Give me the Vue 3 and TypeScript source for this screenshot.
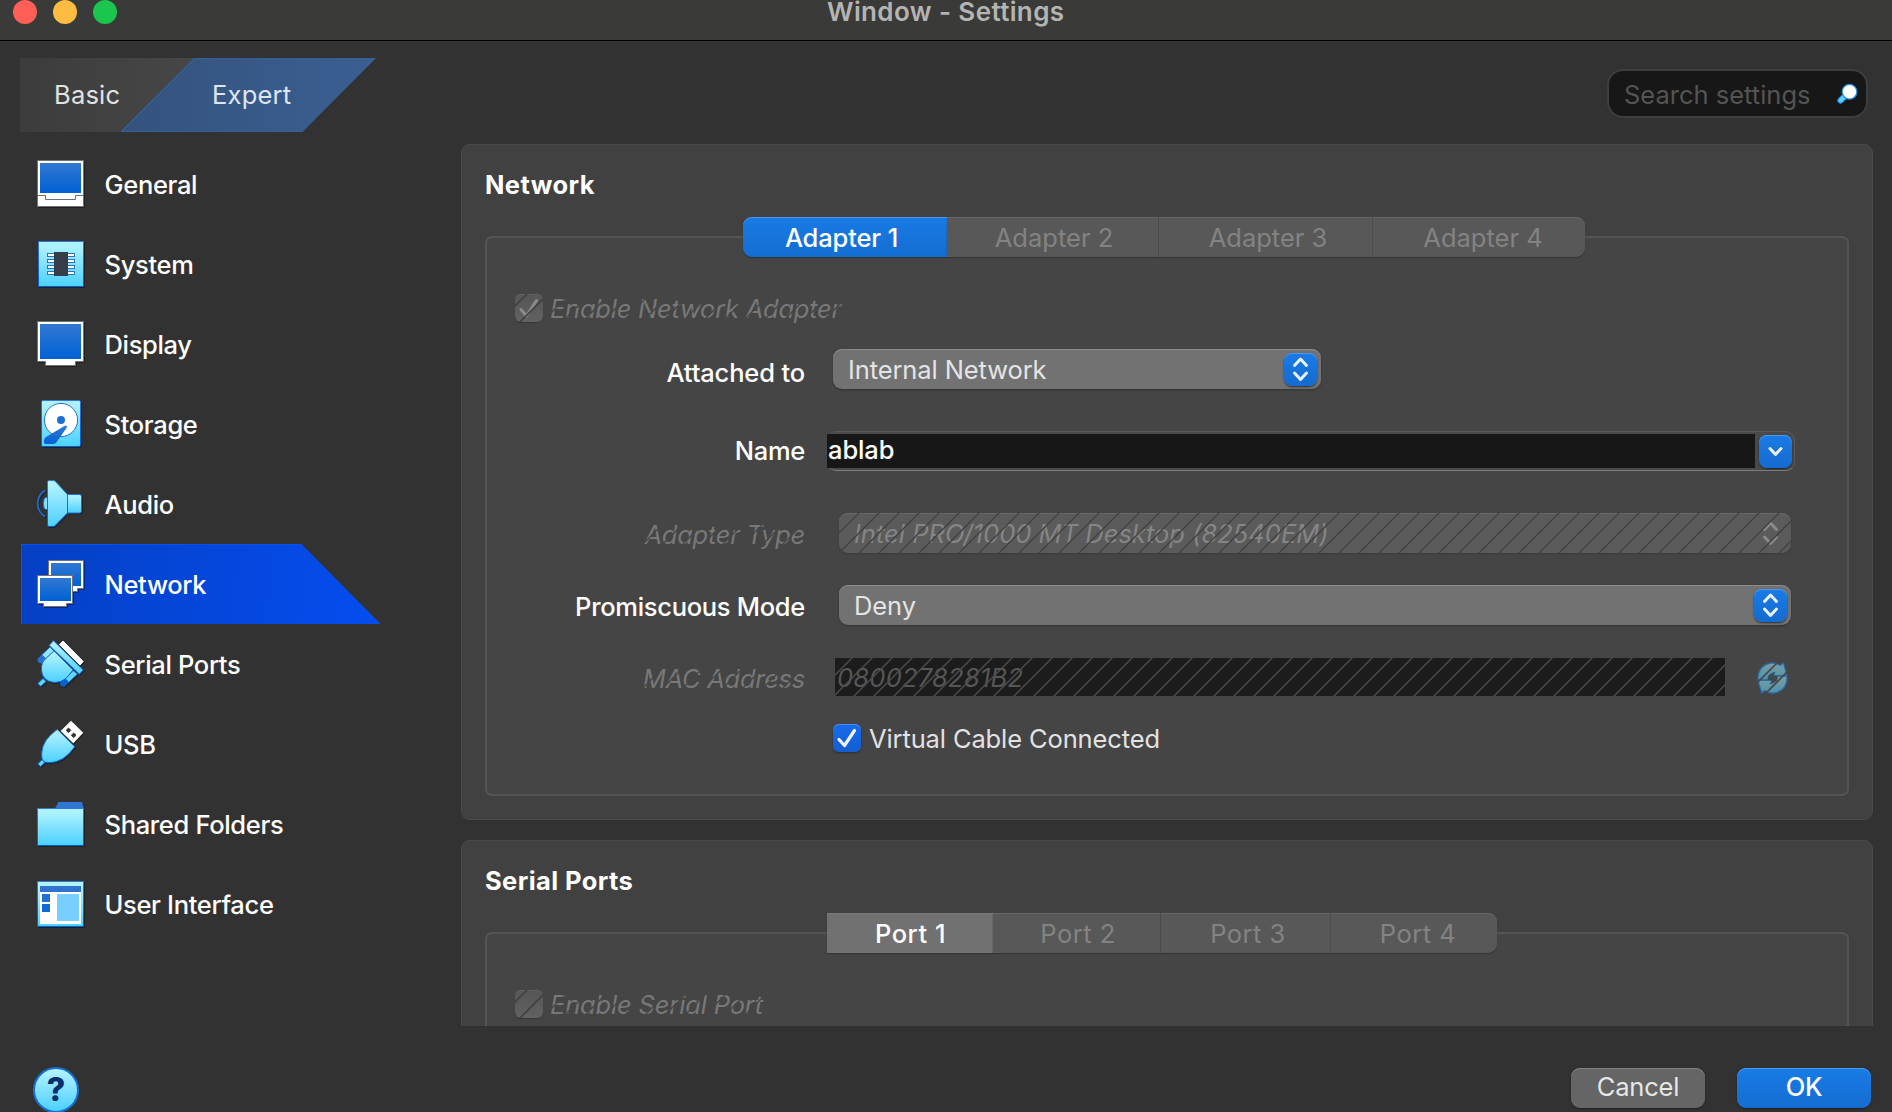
<script setup lang="ts">
type Tab = { label: string; width: number }

const navItems: string[] = [
  'General', 'System', 'Display', 'Storage', 'Audio',
  'Network', 'Serial Ports', 'USB', 'Shared Folders', 'User Interface',
]
const current = 'Network'

const adapterTabs: Tab[] = [
  { label: 'Adapter 1', width: 204 },
  { label: 'Adapter 2', width: 212 },
  { label: 'Adapter 3', width: 214 },
  { label: 'Adapter 4', width: 212 },
]
const portTabs: Tab[] = [
  { label: 'Port 1', width: 166 },
  { label: 'Port 2', width: 168 },
  { label: 'Port 3', width: 170 },
  { label: 'Port 4', width: 166 },
]
const pinRows: number[] = [13.5, 19.5, 25.5, 31.5]
</script>

<template>
  <div class="window">
    <!-- shared gradients and the disabled hatch -->
    <svg class="defs" width="0" height="0">
      <defs>
        <linearGradient id="deep" x1="0" y1="0" x2="0" y2="1">
          <stop offset="0" stop-color="#3278d2" /><stop offset="1" stop-color="#0061d5" />
        </linearGradient>
        <linearGradient id="aqua" x1="0" y1="0" x2="0" y2="1">
          <stop offset="0.1" stop-color="#aef2ff" /><stop offset="1" stop-color="#4cd0ff" />
        </linearGradient>
        <linearGradient id="edge" x1="0" y1="0" x2="0" y2="1">
          <stop offset="0" stop-color="#3278d2" /><stop offset="1" stop-color="#0061d5" />
        </linearGradient>
        <linearGradient id="muted" x1="0" y1="0" x2="0" y2="1">
          <stop offset="0" stop-color="#7f9ea6" /><stop offset="1" stop-color="#4a93ab" />
        </linearGradient>
        <pattern id="hatch" width="20" height="20" patternUnits="userSpaceOnUse">
          <path d="M-1 21L21 -1M-1 1L1 -1M19 21L21 19" stroke="#414141" stroke-width="1.5" />
        </pattern>
        <pattern id="hatchLight" width="20" height="20" patternUnits="userSpaceOnUse" patternTransform="translate(-3 0)">
          <path d="M-1 21L21 -1M-1 1L1 -1M19 21L21 19" stroke="#4a4a4a" stroke-width="1.5" />
        </pattern>
        <pattern id="hatchText" width="20" height="20" patternUnits="userSpaceOnUse">
          <path d="M-1 21L21 -1M-1 1L1 -1M19 21L21 19" stroke="#454545" stroke-width="1.4" />
        </pattern>
      </defs>
    </svg>

    <div class="titlebar">
      <div class="lights"><i class="red" /><i class="yellow" /><i class="green" /></div>
      <div class="title">Window - Settings</div>
    </div>

    <header class="toolbar">
      <div class="modes">
        <svg class="modes-bg" width="357" height="74" viewBox="0 0 357 74">
          <defs>
            <linearGradient id="basicFill" x1="0" x2="1" y1="0" y2="0">
              <stop offset="0" stop-color="#3c3c3c" /><stop offset="1" stop-color="#474747" />
            </linearGradient>
            <linearGradient id="expertFill" x1="0" x2="1" y1="0" y2="0">
              <stop offset="0" stop-color="#34527c" /><stop offset="1" stop-color="#3b5f93" />
            </linearGradient>
          </defs>
          <path d="M0 0H174L100 74H0Z" fill="url(#basicFill)" />
          <path d="M174 0H356L282.500 74H100.500Z" fill="url(#expertFill)" />
          <path d="M101.500 73.500L174.500 .5H355M101 73.500H282" fill="none" stroke="#375f94" stroke-width="1.400" />
        </svg>
        <span class="mode basic">Basic</span>
        <span class="mode expert">Expert</span>
      </div>
      <div class="search">
        <span>Search settings</span>
        <svg width="22" height="22" viewBox="0 0 22 22">
          <path d="M3.500 17.500L8 13" stroke="#1a86dd" stroke-width="6.500" stroke-linecap="round" />
          <path d="M3.800 17.300L8 13" stroke="#5fd0ff" stroke-width="4.500" stroke-linecap="round" />
          <circle cx="12.500" cy="8.800" r="7.400" fill="#fff" stroke="#1f86dc" stroke-width="1.200" />
        </svg>
      </div>
    </header>

    <main class="body">
      <nav class="nav">
        <div v-for="item in navItems" :key="item" class="nav-item" :class="{ active: item === current }">
          <svg class="nav-icon" width="48" height="48" viewBox="0 0 48 48">
            <template v-if="item === 'General'">
              <rect x=".5" y=".5" width="46" height="46" fill="#fff" stroke="#737373" />
              <rect x="3" y="3" width="41" height="30" fill="url(#deep)" />
              <path d="M.5 35.500H8.500V39.500H38.500V35.500H46.500" fill="none" stroke="#6e6e6e" />
            </template>
            <template v-else-if="item === 'System'">
              <rect x="1.500" y="1.500" width="45" height="45" fill="url(#aqua)" stroke="url(#edge)" />
              <rect v-for="y in pinRows" :key="y" x="10.500" :y="y" width="27" height="3" fill="#fff" stroke="#2f74bb" />
              <rect x="17" y="12" width="14" height="24" fill="#373c49" />
            </template>
            <template v-else-if="item === 'Display'">
              <path d="M.5 1.500H46.500V41.500H38.500V45.500H8.500V41.500H.5Z" fill="#fff" stroke="#737373" />
              <rect x="3" y="4" width="41" height="35" fill="url(#deep)" />
            </template>
            <template v-else-if="item === 'Storage'">
              <rect x="4.500" y=".5" width="39" height="46" rx="1.500" fill="url(#aqua)" stroke="url(#edge)" />
              <circle cx="24" cy="20" r="16.600" fill="#fff" stroke="#2372d2" />
              <circle cx="24" cy="20" r="4" fill="#1f6fd3" />
              <path d="M29.600 26Q29 25 27 26.200L9 37Q6.500 39 7 42.800Q7.500 44 9 44H16.500Q18.800 43.800 20 41.500L29.500 28Q30.200 26.800 29.600 26Z" fill="url(#deep)" />
            </template>
            <template v-else-if="item === 'Audio'">
              <path d="M10.500 17.500H8.500Q6.500 18.500 6.500 23.500T8.500 29.500H10.500Z" fill="#84e4ff" stroke="#1f70d2" />
              <path d="M8 10.500Q.8 15 .8 23.500T8 36.500" fill="none" stroke="#1b6ed3" stroke-width="1.700" />
              <rect x="29.500" y="14.500" width="15" height="18.500" rx="2" fill="url(#aqua)" stroke="#1f70d2" />
              <path d="M10.500 2Q10.500 .5 12 .5H16Q17.500 .5 18.500 1.600L30.500 14.500V33L18.500 45.200Q17.500 46.500 16 46.500H12Q10.500 46.500 10.500 45Z" fill="url(#aqua)" stroke="url(#edge)" />
            </template>
            <template v-else-if="item === 'Network'">
              <path d="M11.500 .5H46.500V28.500H40.500V31.500H17V28.500H11.500Z" fill="#fff" stroke="#737373" />
              <rect x="14" y="3" width="30" height="23" fill="url(#deep)" />
              <path d="M.5 15.500H35.500V43.500H29.500V46.500H6.500V43.500H.5Z" fill="#fff" stroke="#737373" />
              <rect x="3" y="18" width="31" height="23" fill="url(#deep)" />
            </template>
            <template v-else-if="item === 'Serial Ports'">
              <path d="M26 1L46.200 21.500L43 25L22.500 4.500Z" fill="#fff" stroke="#fff" stroke-linejoin="round" />
              <path d="M.8 43.500L6 38.500L9 41.500L3.800 46.300Z" fill="#5fd7ff" stroke="#126cd4" />
              <path d="M4.700 15L13 7L17 11L8.500 19Z" fill="#8ee7ff" stroke="#1f70d2" />
              <path d="M.5 19L4.700 14.500L9 18.500L4.500 24L1 22Z" fill="#2471d3" />
              <path d="M28 38.700L36 30.500L40.500 34L31.500 42.500Z" fill="#60d6ff" stroke="#1f70d2" />
              <path d="M23 42.700L28 38.500L32 42L27.500 47L24 46Z" fill="#0862d4" />
              <path d="M17 11L36 30L29 38.500Q24 42.800 17 42.500Q5 41 4.500 30Q4 22 9 18.500Z" fill="url(#aqua)" stroke="url(#edge)" />
              <path d="M16.500 .8L46.300 30L42.300 34.300L12.300 5.300Z" fill="url(#aqua)" stroke="url(#edge)" stroke-linejoin="round" />
            </template>
            <template v-else-if="item === 'USB'">
              <path d="M34 .8L46.300 12.700L36.300 23.300L23.700 11Z" fill="#fff" />
              <path d="M31.500 8L33.800 10.300L31.500 12.600L29.200 10.300ZM36.700 13L39 15.300L36.700 17.600L34.400 15.300Z" fill="#333" stroke="#333" />
              <path d="M.8 44L5.200 39.500L8 42.300L3.600 46.500Z" fill="#5fd7ff" stroke="#126cd4" />
              <path d="M20.300 9.500L37.700 26.700Q27 42.500 12 42.800Q8 42.500 6 41Q4.500 39 4.600 34Q5 20 20.300 9.500Z" fill="url(#aqua)" stroke="url(#edge)" />
            </template>
            <template v-else-if="item === 'Shared Folders'">
              <path d="M18 8.500L21.500 2H45L47 8.500Z" fill="#2f75d1" />
              <rect x=".5" y="8.500" width="46" height="37" fill="url(#aqua)" stroke="url(#edge)" />
            </template>
            <template v-else>
              <rect x=".5" y="1.500" width="46" height="45" fill="url(#aqua)" stroke="url(#edge)" />
              <rect x="3" y="12" width="41" height="32" fill="#fff" />
              <rect x="3" y="6" width="41" height="6" fill="#2f73cf" />
              <rect x="5" y="14" width="8" height="8" fill="#2170d2" />
              <rect x="5" y="24" width="8" height="8" fill="#0f68d3" />
              <rect x="20" y="14" width="22" height="27" fill="#78cfff" />
            </template>
          </svg>
          <span>{{ item }}</span>
        </div>
      </nav>

      <section class="content">
        <article class="panel network">
          <h2>Network</h2>
          <div class="tabs adapters">
            <div v-for="(t, i) in adapterTabs" :key="t.label" class="tab" :class="{ selected: i === 0 }" :style="{ width: t.width + 'px' }">{{ t.label }}</div>
          </div>
          <div class="group">
            <div class="check-row">
              <div class="check off">
                <svg width="28" height="28" viewBox="0 0 28 28">
                  <path d="M6 15.500L11.500 22L21.500 6.500" fill="none" stroke="#8b8b8b" stroke-width="3" stroke-linecap="round" stroke-linejoin="round" />
                  <path d="M-1 13L13 -1M4 29L29 4" stroke="#414141" stroke-width="1.700" />
                </svg>
              </div>
              <span class="dim">Enable Network Adapter
                <svg class="hatch"><rect width="100%" height="100%" fill="url(#hatchText)" /></svg>
              </span>
            </div>

            <div class="row r1">
              <label>Attached to</label>
              <div class="select">
                <span>Internal Network</span>
                <svg class="stepper" width="33" height="33" viewBox="0 0 33 33"><path d="M10.500 12.500L16.500 6L22.500 12.500M10.500 20L16.500 26.500L22.500 20" /></svg>
              </div>
            </div>

            <div class="row r2">
              <label>Name</label>
              <div class="combo">
                <div class="combo-text">ablab</div>
                <svg class="stepper" width="33" height="33" viewBox="0 0 33 33"><path d="M11 13.500L16.500 19.500L22 13.500" /></svg>
              </div>
            </div>

            <div class="row r3">
              <label class="dim">Adapter Type
                <svg class="hatch"><rect width="100%" height="100%" fill="url(#hatchText)" /></svg>
              </label>
              <div class="select disabled">
                <span>Intel PRO/1000 MT Desktop (82540EM)</span>
                <svg class="stepper plain" width="33" height="33" viewBox="0 0 33 33"><path d="M10.500 12.500L16.500 6L22.500 12.500M10.500 20L16.500 26.500L22.500 20" /></svg>
                <svg class="hatch"><rect width="100%" height="100%" fill="url(#hatch)" /></svg>
              </div>
            </div>

            <div class="row r4">
              <label>Promiscuous Mode</label>
              <div class="select">
                <span>Deny</span>
                <svg class="stepper" width="33" height="33" viewBox="0 0 33 33"><path d="M10.500 12.500L16.500 6L22.500 12.500M10.500 20L16.500 26.500L22.500 20" /></svg>
              </div>
            </div>

            <div class="row r5">
              <label class="dim">MAC Address
                <svg class="hatch"><rect width="100%" height="100%" fill="url(#hatchText)" /></svg>
              </label>
              <div class="mac">
                <span>0800278281B2</span>
                <svg class="hatch"><rect width="100%" height="100%" fill="url(#hatchLight)" /></svg>
              </div>
              <svg class="refresh" width="32" height="32" viewBox="0 0 32 32">
                <g fill="url(#muted)" stroke="#2c6aa5" stroke-width="1.200" stroke-linejoin="round">
                  <path d="M1 17.800Q.5 3 15 .8Q20 .8 23.300 3.500L26.300 .8L30 13.500L14.500 13.500L17 10.500Q11 12 10.500 17.800Z" />
                  <path d="M30 14.200Q30.500 29 16 31.200Q11 31.200 7.700 28.500L4.700 31.200L1 18.500L16.500 18.500L14 21.500Q20 20 20.500 14.200Z" />
                </g>
                <path d="M18.500 10L11.500 13.500L11 18H15L12.500 22.500L20 18.500L20.500 14H16.500Z" fill="#41484d" />
                <path d="M0 21L20 1M9 31L30 10" stroke="#454545" stroke-width="1.600" />
              </svg>
            </div>

            <div class="row r6">
              <div class="check on">
                <svg width="28" height="28" viewBox="0 0 28 28"><path d="M6 15.500L11.500 21.500L21.500 6.500" fill="none" stroke="#f0f5fd" stroke-width="3.200" stroke-linecap="round" stroke-linejoin="round" /></svg>
              </div>
              <span>Virtual Cable Connected</span>
            </div>
          </div>
        </article>

        <article class="panel serial">
          <h2>Serial Ports</h2>
          <div class="tabs ports">
            <div v-for="(t, i) in portTabs" :key="t.label" class="tab" :class="{ selected: i === 0 }" :style="{ width: t.width + 'px' }">{{ t.label }}</div>
          </div>
          <div class="group">
            <div class="check-row">
              <div class="check off">
                <svg width="28" height="28" viewBox="0 0 28 28"><path d="M-1 13L13 -1M4 29L29 4" stroke="#414141" stroke-width="1.700" /></svg>
              </div>
              <span class="dim">Enable Serial Port
                <svg class="hatch"><rect width="100%" height="100%" fill="url(#hatchText)" /></svg>
              </span>
            </div>
          </div>
        </article>
      </section>
    </main>

    <footer class="footer">
      <div class="help">?</div>
      <div class="actions">
        <button class="btn">Cancel</button>
        <button class="btn primary">OK</button>
      </div>
    </footer>
  </div>
</template>

<style>
body { margin: 0; background: #323232; }
</style>

<style scoped>
.window {
  width: 1892px; height: 1112px; overflow: hidden; display: flex; flex-direction: column;
  background: #323232; color: #fff;
  font: 400 25.5px/30px Inter, "Liberation Sans", sans-serif;
  white-space: nowrap;
}
.defs { position: absolute; }
.titlebar {
  height: 40px; flex: none; display: flex; background: #3a3a38; border-bottom: 1px solid #000;
}
.lights { display: flex; gap: 16px; padding-left: 13px; width: 815px; box-sizing: border-box; flex: none; }
.lights i { width: 24px; height: 24px; border-radius: 50%; }
.red { background: #ff5f57; }
.yellow { background: #febc40; }
.green { background: #1ac64e; }
.title { margin-left: 12px; line-height: 23px; font-weight: 600; font-size: 26px; letter-spacing: .38px; color: #b4b4b3; }

.toolbar { height: 103px; flex: none; display: flex; justify-content: space-between; box-sizing: border-box; padding: 17px 24px 0 20px; }
.modes { display: grid; grid-template-columns: 157px 200px; height: 74px; }
.modes-bg { grid-area: 1 / 1 / 2 / 3; }
.mode { padding-top: 22px; color: #e2e2e2; letter-spacing: .2px; }
.basic { grid-area: 1 / 1; padding-left: 34px; }
.expert { grid-area: 1 / 2; padding-left: 35px; color: #dfe6ef; }
.search {
  display: flex; align-items: flex-start; justify-content: space-between; box-sizing: border-box;
  width: 261px; height: 49px; margin-top: 11px; padding: 9px 7px 0 15px;
  border: 2px solid #3e3e3e; border-radius: 16px; background: #171717; color: #545454;
}
.search svg { margin-top: 3px; }

.body { height: 882px; flex: none; display: flex; }
.nav { width: 440px; padding-left: 21px; flex: none; }
.nav-item { display: flex; height: 80px; width: 360px; font-weight: 500; letter-spacing: -.33px; }
.nav-item span { margin: 26px 0 0 19.500px; }
.nav-item.active {
  background: linear-gradient(100deg, #0540c4, #054df0);
  clip-path: polygon(0 0, 280.500px 0, 359.500px 100%, 0 100%);
  box-shadow: inset 1px 1px #0a50ea;
}
.nav-icon { margin: 16px 0 0 16px; filter: drop-shadow(1px 1px 0 rgba(0, 0, 0, .35)); }

.content { width: 1412px; overflow: hidden; display: flex; flex-direction: column; gap: 20px; }
.panel { flex: none; box-sizing: border-box; border: 1px solid #4a4a4a; border-radius: 9px; background: #414141; padding: 25px 23px 0 23px; }
.network { height: 676px; }
.serial { height: 676px; }
h2 { margin: 0; font-size: 25.500px; font-weight: 700; line-height: 30px; letter-spacing: .4px; }
.tabs { display: flex; position: relative; z-index: 1; height: 40px; margin-top: 17px; }
.adapters { margin-left: 258px; }
.ports { margin-left: 342px; }
.tab {
  box-sizing: border-box; padding: 6px 0 0 3px; text-align: center; background: #585858; color: #838383;
  border-right: 1px solid #505050; box-shadow: inset 0 1px #676767, 0 1px 1px #353535;
}
.tab:nth-child(3) { padding-left: 5px; }
.tab:nth-child(4) { padding-left: 8px; }
.tab:last-child { border-radius: 0 9px 9px 0; border-right: 0; }
.adapters .tab.selected {
  background: linear-gradient(#187be6, #156dd1); border-radius: 9px 0 0 9px; color: #fff; border-right: 0;
  font-weight: 500; letter-spacing: -.15px; padding: 6px 7px 0 0; box-shadow: inset 0 1px #4d98eb, 0 1px 1px #303030;
}
.ports .tab { letter-spacing: .5px; }
.ports .tab.selected { padding-left: 1px; background: #717171; color: #fff; border-right: 0; font-weight: 500; box-shadow: inset 0 1px #7b7b7b, 0 1px 1px #353535; }
.group { box-sizing: border-box; height: 560px; margin-top: -21px; border: 2px solid #545454; border-radius: 7px; background: #454545; }

.check-row { display: flex; height: 30px; padding: 56px 0 0 28px; }
.check { width: 28px; height: 28px; border-radius: 6px; flex: none; }
.check svg { display: block; }
.check.off { background: linear-gradient(#565656, #616161); box-shadow: inset 0 1px #626262, 0 1px 1px #383838; }
.check.on { background: linear-gradient(#166cec, #155dd0); box-shadow: inset 0 1px #4b8df0, 0 1px 2px #2c2c2c; }
.check-row span { margin-left: 7px; letter-spacing: -.24px; }
.serial .check-row span { letter-spacing: -.16px; }
.dim { position: relative; color: #787878; font-style: italic; }
.hatch { position: absolute; inset: 0; width: 100%; height: 100%; }

.row { display: flex; align-items: flex-start; }
.row label { width: 318px; flex: none; text-align: right; font-weight: 500; letter-spacing: -.3px; }
.row label.dim { font-weight: 400; letter-spacing: -.26px; }
.r1 { margin-top: 25px; height: 40px; }
.r1 label { margin-top: 9px; letter-spacing: -.15px; }
.r1 .select { margin-left: 28px; width: 488px; }
.r2 { margin-top: 42px; height: 40px; }
.r2 label { margin-top: 5px; }
.r3 { margin-top: 42px; height: 40px; }
.r3 label { margin-top: 7px; }
.r3 .select, .r4 .select { margin-left: 34px; width: 952px; }
.r4 { margin-top: 32px; height: 40px; }
.r4 label { margin-top: 7px; }
.r5 { margin-top: 33px; height: 38px; }
.r5 label { margin-top: 6px; }
.r6 { margin: 28px 0 0 346px; }
.r6 span { margin-left: 8px; color: #e2e2e2; letter-spacing: -.12px; }

.select {
  position: relative; box-sizing: border-box; height: 40px; padding: 6px 4px 0 15px; display: flex; justify-content: space-between;
  border-radius: 9px; background: #727272; color: #e4e4e4; box-shadow: inset 0 1px #8b8b8b, 0 1px 2px #313131;
  letter-spacing: -.1px;
}
.select .stepper { margin-top: -2px; }
.stepper { flex: none; border-radius: 8px; background: linear-gradient(#197be6, #156bce); box-shadow: inset 0 1px #4d98eb, 0 1px 2px rgba(0, 0, 0, .6); }
.stepper path { fill: none; stroke: #e9f2fd; stroke-width: 3; stroke-linecap: round; stroke-linejoin: round; }
.select.disabled { background: #5b5b5b; color: #858585; font-style: italic; letter-spacing: .02px; box-shadow: inset 0 1px #6a6a6a, 0 1px 2px #3b3b3b; overflow: hidden; }
.stepper.plain { background: none; box-shadow: none; }
.stepper.plain path { stroke: #8a8a8a; }

.combo {
  box-sizing: border-box; width: 968px; height: 40px; margin-left: 22px; display: flex; padding: 2px 3px 0 0;
  border: 1px solid #595959; border-left: 0; border-bottom-color: #7d7d7d; border-radius: 9px; background: #4a4a4a;
}
.combo-text { box-sizing: border-box; width: 928px; flex: none; height: 34px; padding: 1px 0 0 1px; background: #171717; font-weight: 500; letter-spacing: -.1px; }
.combo .stepper { margin: 1px 0 0 3.500px; }

.mac { position: relative; width: 890px; height: 38px; box-sizing: border-box; margin-left: 30px; padding: 5px 0 0 2px; background: #1c1c1c; color: #565656; font-style: italic; letter-spacing: .25px; }
.refresh { margin: 4px 0 0 32px; }

.footer { flex: 1; display: flex; justify-content: space-between; padding: 41px 21px 0 33px; }
.help {
  box-sizing: border-box; width: 46px; height: 46px; border: 2px solid #1671d2; border-radius: 50%;
  background: linear-gradient(#b5f3ff, #4cd0ff); color: #0b2f6e; text-align: center; font-size: 32px; font-weight: 800; line-height: 42px;
}
.actions { display: flex; gap: 32px; margin-top: 1px; }
.btn {
  box-sizing: border-box; width: 134px; height: 40px; padding: 0 0 2px; border: 0; border-radius: 9px; background: #656565; color: #e6e6e6;
  font: 400 25.500px/30px Inter, "Liberation Sans", sans-serif; letter-spacing: -.19px; box-shadow: inset 0 1px #828282, 0 1px 2px #202020;
}
.btn.primary { background: linear-gradient(#187be6, #156dd1); color: #fff; font-weight: 500; box-shadow: inset 0 1px #4d98eb, 0 1px 2px #202020; }
</style>
